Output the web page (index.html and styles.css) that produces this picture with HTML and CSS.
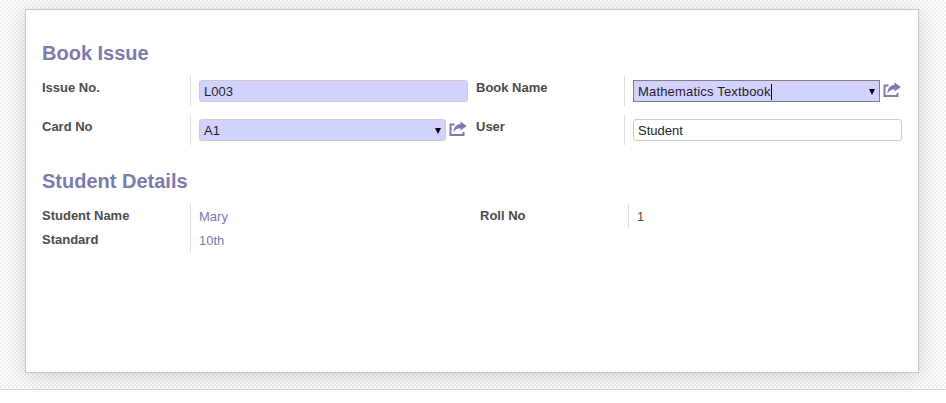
FILE: index.html
```html
<!DOCTYPE html>
<html lang="en">
<head>
<meta charset="utf-8">
<title>Book Issue</title>
<link rel="stylesheet" href="styles.css">
</head>
<body>
<svg class="defs" aria-hidden="true"><symbol id="share" viewBox="0 0 18 16"><path d="M5.500 3.500H1.500V14H14.500V11" fill="none" stroke="currentColor" stroke-width="2"/><path d="M11.500 0.500L17.800 5L11.500 9.500V7.200C8.500 7.200 6.200 8.500 4.500 11.500C4.500 6.500 7 3.300 11.500 3Z" fill="currentColor"/></symbol></svg>
<div class="backdrop">
  <main class="sheet">
    <h2>Book Issue</h2>
    <div class="form">
      <label>Issue No.</label>
      <div class="cell"><div class="field required"><span class="value">L003</span></div></div>
      <label>Book Name</label>
      <div class="cell"><div class="field required focused"><span class="value">Mathematics Textbook</span><span class="caret"></span><span class="arrow"></span></div><svg class="share"><use href="#share"/></svg></div>
      <label>Card No</label>
      <div class="cell"><div class="field required"><span class="value">A1</span><span class="arrow"></span></div><svg class="share"><use href="#share"/></svg></div>
      <label>User</label>
      <div class="cell"><div class="field"><span class="value">Student</span></div></div>
    </div>
    <h2 class="second">Student Details</h2>
    <div class="details">
      <label>Student Name</label>
      <div class="read link">Mary</div>
      <label>Roll No</label>
      <div class="read">1</div>
      <label>Standard</label>
      <div class="read link">10th</div>
    </div>
  </main>
</div>
</body>
</html>
```
FILE: styles.css
```css
* { box-sizing: border-box; }
body {
  margin: 0;
  height: 403px;
  overflow: hidden;
  background: #fff;
  color: #4c4c4c;
  font: 13px/18px "Liberation Sans", Arial, sans-serif;
}
.defs { display: none; }
.backdrop {
  height: 390px;
  padding: 9px 27px 0 25px;
  overflow: hidden;
  border-bottom: 1px solid #d5d5d5;
  background: repeating-conic-gradient(#eee 0 25%, #fff 0 50%) 0 0 / 4px 4px;
}
.sheet {
  height: 364px;
  padding: 30px 16px;
  background: #fff;
  border: 1px solid #c8c8d3;
  box-shadow: 0 4px 20px rgba(0, 0, 0, .15);
}
h2 {
  margin: 0;
  height: 27px;
  color: #7c7bad;
  font-size: 20px;
  line-height: 26px;
}
.form {
  display: grid;
  grid-template-columns: 148px 286px 148px 278px;
  grid-template-rows: 30px 30px;
  row-gap: 9px;
  margin-top: 9px;
}
label { font-weight: bold; padding-top: 3px; }
.cell {
  display: flex;
  align-items: flex-start;
  gap: 3px;
  padding: 4px 0 0 8px;
  border-left: 1px solid #ddd;
}
.cell:nth-child(4n + 2) { padding-right: 8px; }
.field {
  display: flex;
  align-items: center;
  flex: 1;
  height: 22px;
  padding: 1px 4px 0;
  border: 1px solid #ccc;
  border-radius: 3px;
  background: #fff;
  color: #1f1f1f;
}
.required { background: #d2d2ff; }
.focused { border-color: #808080; border-radius: 0; }
.focused .value { letter-spacing: .18px; }
.caret { width: 1px; height: 16px; background: #000; }
.arrow {
  margin-left: auto;
  border: solid transparent;
  border-width: 6px 3px 0;
  border-top-color: #000;
}
.share { width: 18px; height: 16px; margin: 2px 1px 0 0; color: #7c7bad; }
.second { margin-top: 23px; }
.details {
  display: grid;
  grid-template-columns: 148px 290px 148px 274px;
  grid-template-rows: 24px 24px;
  margin-top: 9px;
}
.read { padding: 4px 8px 0; border-left: 1px solid #ddd; }
.link { color: #7c7bad; }
```
